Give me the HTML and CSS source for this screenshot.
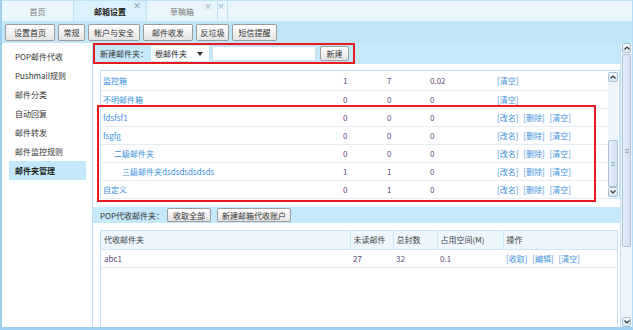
FILE: index.html
```html
<!DOCTYPE html>
<html>
<head>
	<meta charset="utf-8">
	<title>邮件夹管理</title>
	<link rel="stylesheet" href="styles.css">
</head>
<body>

<div class="frame">
	<div class="tabs">
		<div class="tab">首页</div>
		<div class="tab active">邮箱设置<span class="close">×</span></div>
		<div class="tab">草稿箱<span class="close">×</span></div>
		<div class="tab mini"><span class="close">×</span></div>
	</div>

	<div class="toolbar">
		<button class="btn">设置首页</button>
		<button class="btn">常规</button>
		<button class="btn">帐户与安全</button>
		<button class="btn">邮件收发</button>
		<button class="btn">反垃圾</button>
		<button class="btn">短信提醒</button>
	</div>

	<div class="body">
		<ul class="side">
			<li>POP邮件代收</li>
			<li>Pushmail规则</li>
			<li>邮件分类</li>
			<li>自动回复</li>
			<li>邮件转发</li>
			<li>邮件监控规则</li>
			<li class="on">邮件夹管理</li>
		</ul>

		<div class="main">
			<div class="content">
				<div class="bar newbar">
					<span class="label">新建邮件夹：</span>
					<span class="select">根邮件夹
						<svg width="6" height="4" viewBox="0 0 6 4"><path d="M0 0h6L3 4z" fill="#333"/></svg>
					</span>
					<input class="name" type="text">
					<button class="btn">新建</button>
				</div>

				<div class="panel">
					<table class="list">
						<tr><td class="n"><a>监控箱</a></td><td class="c1">1</td><td class="c2">7</td><td class="c3">0.02</td><td class="op"><a>[清空]</a></td></tr>
						<tr><td class="n"><a>不明邮件箱</a></td><td class="c1">0</td><td class="c2">0</td><td class="c3">0</td><td class="op"><a>[清空]</a></td></tr>
						<tr><td class="n"><a>fdsfsf1</a></td><td class="c1">0</td><td class="c2">0</td><td class="c3">0</td><td class="op"><a>[改名]</a> <a>[删除]</a> <a>[清空]</a></td></tr>
						<tr><td class="n"><a>fsgfg</a></td><td class="c1">0</td><td class="c2">0</td><td class="c3">0</td><td class="op"><a>[改名]</a> <a>[删除]</a> <a>[清空]</a></td></tr>
						<tr><td class="n lv2"><a>二级邮件夹</a></td><td class="c1">0</td><td class="c2">0</td><td class="c3">0</td><td class="op"><a>[改名]</a> <a>[删除]</a> <a>[清空]</a></td></tr>
						<tr><td class="n lv3"><a>三级邮件夹dsdsdsdsdsds</a></td><td class="c1">1</td><td class="c2">1</td><td class="c3">0</td><td class="op"><a>[改名]</a> <a>[删除]</a> <a>[清空]</a></td></tr>
						<tr><td class="n"><a>自定义</a></td><td class="c1">0</td><td class="c2">1</td><td class="c3">0</td><td class="op"><a>[改名]</a> <a>[删除]</a> <a>[清空]</a></td></tr>
					</table>
					<div class="sb inner">
						<div class="arr"><svg width="6" height="4" viewBox="0 0 6 4"><path d="M0.5 3.5L3 1l2.5 2.5" fill="none" stroke="#333" stroke-width="1.2"/></svg></div>
						<div class="track">
							<div class="space"></div>
							<div class="thumb"><i></i></div>
						</div>
						<div class="arr"><svg width="6" height="4" viewBox="0 0 6 4"><path d="M0.5 0.5L3 3l2.5-2.5" fill="none" stroke="#333" stroke-width="1.2"/></svg></div>
					</div>
				</div>

				<div class="bar popbar">
					<span class="label">POP代收邮件夹：</span>
					<button class="btn">收取全部</button>
					<button class="btn">新建邮箱代收账户</button>
				</div>

				<div class="panel2">
					<table class="grid">
						<tr class="head"><td class="g0">代收邮件夹</td><td class="g1">未读邮件</td><td class="g2">总封数</td><td class="g3">占用空间(M)</td><td class="g4">操作</td></tr>
						<tr><td class="g0">abc1</td><td>27</td><td>32</td><td>0.1</td><td class="op"><a>[收取]</a> <a>[编辑]</a> <a>[清空]</a></td></tr>
					</table>
				</div>
			</div>

			<div class="sb outer">
				<div class="arr"><svg width="6" height="4" viewBox="0 0 6 4"><path d="M0.5 3.5L3 1l2.5 2.5" fill="none" stroke="#333" stroke-width="1.2"/></svg></div>
				<div class="track">
					<div class="thumb"><i></i></div>
					<div class="space"></div>
				</div>
				<div class="arr"><svg width="6" height="4" viewBox="0 0 6 4"><path d="M0.5 0.5L3 3l2.5-2.5" fill="none" stroke="#333" stroke-width="1.2"/></svg></div>
			</div>
		</div>
	</div>

	<!-- 红框标注 -->
	<div class="mark mark1"></div>
	<div class="mark mark2"></div>
</div>

</body>
</html>
```

FILE: styles.css
```css
*{
	margin: 0;
	padding: 0;
	list-style: none;
	box-sizing: border-box;
}

body{
	font-family: "Noto Sans CJK SC", "Liberation Sans", sans-serif;
	font-size: 8px;
	color: #333;
	background-color: #fff;
}

.frame{
	position: relative;
	width: 633px;
	height: 330px;
	border-left: 2px solid #9fcfee;
	border-right: 1px solid #b3dbf3;
	border-bottom: 3px solid #9fcfee;
	display: flex;
	flex-direction: column;
	overflow: hidden;
}

/* 标签栏 */
.tabs{
	height: 22px;
	display: flex;
	background-color: #e9f6fd;
	border-top: 1px solid #bfe2f6;
	border-bottom: 1px solid #c6e7f9;
}

.tab{
	position: relative;
	width: 72px;
	display: flex;
	align-items: center;
	justify-content: center;
	color: #7a7a7a;
	border-right: 1px solid #bfe2f6;
}

.tab:nth-child(2){ width: 73px; }
.tab:nth-child(3){ width: 71px; }

.tab.active{
	font-weight: bold;
	color: #222;
	background-color: #dcf1fc;
}

.tab.mini{
	width: 10px;
}

.tab .close{
	position: absolute;
	top: 0;
	right: 5px;
	font-size: 8px;
	line-height: 9px;
	color: #8aa3b5;
}

.tab.mini .close{
	right: 2px;
}

/* 工具栏 */
.toolbar{
	height: 21px;
	display: flex;
	gap: 3px;
	padding: 2px 0 0 3px;
	background-color: #c1e6fa;
}

.btn{
	flex-shrink: 0;
	height: 17px;
	padding: 0;
	font-family: inherit;
	font-size: 8px;
	white-space: nowrap;
	color: #333;
	background: linear-gradient(#ffffff, #e4e4e4);
	border: 1px solid #9c9c9c;
	border-radius: 2px;
}

.toolbar .btn:nth-child(1){ width: 50px; }
.toolbar .btn:nth-child(2){ width: 27px; }
.toolbar .btn:nth-child(3){ width: 52px; }
.toolbar .btn:nth-child(4){ width: 50px; }
.toolbar .btn:nth-child(5){ width: 33px; }
.toolbar .btn:nth-child(6){ width: 45px; }

.body{
	flex: 1;
	display: flex;
	min-height: 0;
}

/* 左侧菜单 */
.side{
	width: 91px;
	padding-top: 4px;
	border-right: 1px solid #bde0f5;
}

.side li{
	height: 19px;
	line-height: 19px;
	margin-left: 7px;
	width: 77px;
	padding-left: 6px;
	color: #333;
}

.side li.on{
	background-color: #c4e8fb;
	font-weight: bold;
	color: #222;
}

.main{
	flex: 1;
	display: flex;
}

.content{
	flex: 1;
	display: flex;
	flex-direction: column;
}

.bar{
	display: flex;
	align-items: center;
	padding-left: 7px;
	background-color: #c5e8fb;
}

.bar .label{
	flex-shrink: 0;
	white-space: nowrap;
	color: #333;
}

.newbar{
	height: 21px;
}

.select{
	width: 58px;
	height: 15px;
	margin-left: 3px;
	display: flex;
	align-items: center;
	justify-content: space-between;
	padding: 0 6px 0 4px;
	background-color: #fff;
	color: #222;
}

.name{
	width: 104px;
	height: 15px;
	margin-left: 3px;
	border: 1px solid #cfe0ec;
	background-color: #fff;
}

.newbar .btn{
	width: 29px;
	height: 15px;
	margin-left: 4px;
}

/* 邮件夹列表 */
.panel{
	height: 129px;
	margin: 6px 0 0 7px;
	display: flex;
	border: 1px solid #c3e2f5;
	background-color: #fff;
}

.list{
	flex: 1;
	align-self: flex-start;
	border-collapse: collapse;
	table-layout: fixed;
	margin-top: 1px;
}

.list td{
	height: 18px;
	padding-left: 2px;
	border-bottom: 1px solid #e6eef3;
	color: #5d4c7c;
	white-space: nowrap;
}

.list .n{ width: 240px; }
.list .c1{ width: 44px; }
.list .c2{ width: 43px; }
.list .c3{ width: 67px; }

.list .lv2{ padding-left: 13px; }
.list .lv3{ padding-left: 21px; }

a{
	color: #3b8fda;
}

.op a{
	color: #3f92dc;
	margin-right: 3px;
}

/* 滚动条 */
.sb{
	display: flex;
	flex-direction: column;
	background-color: #eef5fb;
}

.sb.inner{
	width: 10px;
	margin: 1px 1px 1px 0;
}

.sb.outer{
	width: 12px;
	padding: 0 1px;
	border-left: 1px solid #c6e3f5;
}

.arr{
	height: 10px;
	display: flex;
	align-items: center;
	justify-content: center;
	background: linear-gradient(#f8fbfe, #d6e6f3);
	border: 1px solid #a5bfd7;
	border-radius: 2px;
}

.track{
	flex: 1;
	display: flex;
	flex-direction: column;
}

.space{
	flex: 1;
}

.thumb{
	display: flex;
	align-items: center;
	justify-content: center;
	background: linear-gradient(90deg, #e7f0f9, #d2e2f1);
	border: 1px solid #a9c2da;
	border-radius: 2px;
}

.inner .thumb{
	height: 47px;
}

.outer .thumb{
	height: 193px;
	margin-top: 1px;
}

.thumb i{
	width: 4px;
	height: 4px;
	border-top: 1px solid #9bb3c9;
	border-bottom: 1px solid #9bb3c9;
	background-color: #c9d9e8;
}

.popbar{
	height: 16px;
	margin-top: 8px;
}

.popbar .btn{
	height: 14px;
}

.popbar .btn:nth-of-type(1){ width: 44px; margin-left: 3px; }
.popbar .btn:nth-of-type(2){ width: 74px; margin-left: 6px; }

/* 代收表格 */
.panel2{
	flex: 1;
	margin: 7px 2px 0 7px;
	border: 1px solid #c3e2f5;
	border-bottom: none;
	background-color: #fff;
}

.grid{
	width: 100%;
	border-collapse: collapse;
	table-layout: fixed;
}

.grid td{
	height: 18px;
	padding-left: 3px;
	border-bottom: 1px solid #e3ebf1;
	color: #5d4c7c;
	white-space: nowrap;
}

.grid .head td{
	background-color: #eef7fd;
	border-bottom: 1px solid #c9e5f6;
	border-left: 1px solid #c9e5f6;
	color: #444;
}

.grid .head td.g0{
	border-left: none;
}

.grid .g0{ width: 249px; }
.grid .g1{ width: 43px; }
.grid .g2{ width: 44px; }
.grid .g3{ width: 66px; }

/* 红框 */
.mark{
	position: absolute;
	border: 2px solid #e8191f;
}

.mark1{
	left: 91px;
	top: 43px;
	width: 262px;
	height: 21px;
}

.mark2{
	left: 95px;
	top: 105px;
	width: 499px;
	height: 97px;
}
```
